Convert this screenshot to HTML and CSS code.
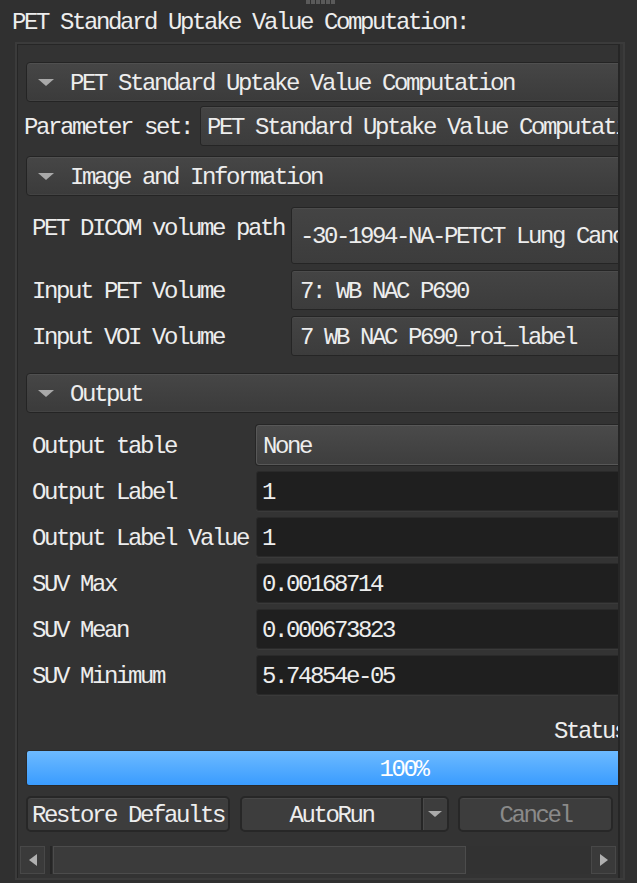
FILE: index.html
```html
<!DOCTYPE html>
<html>
<head>
<meta charset="utf-8">
<link rel="stylesheet" href="styles.css">
</head>
<body>
<div class="grip"><span></span><span></span><span></span><span></span><span></span><span></span></div>
<div class="title">PET Standard Uptake Value Computation:</div>
<div class="frame">
  <div class="viewport">
    <div class="content">
      <div class="header"><span class="arrow"></span><span class="htext">PET Standard Uptake Value Computation</span></div>
      <div class="param-row">
        <span class="label">Parameter set:</span>
        <div class="combo">PET Standard Uptake Value Computation</div>
      </div>
      <div class="header section-gap"><span class="arrow"></span><span class="htext">Image and Information</span></div>
      <div class="form form-image">
        <div class="label">PET DICOM volume path</div>
        <div class="combo combo-img path">-30-1994-NA-PETCT Lung Cancer</div>
        <div class="label">Input PET Volume</div>
        <div class="combo combo-img">7: WB NAC P690</div>
        <div class="label">Input VOI Volume</div>
        <div class="combo combo-img">7 WB NAC P690_roi_label</div>
      </div>
      <div class="header output-gap"><span class="arrow"></span><span class="htext">Output</span></div>
      <div class="form form-output">
        <div class="label">Output table</div>
        <div class="combo combo-light">None</div>
        <div class="label">Output Label</div>
        <div class="field">1</div>
        <div class="label">Output Label Value</div>
        <div class="field">1</div>
        <div class="label">SUV Max</div>
        <div class="field">0.00168714</div>
        <div class="label">SUV Mean</div>
        <div class="field">0.000673823</div>
        <div class="label">SUV Minimum</div>
        <div class="field">5.74854e-05</div>
      </div>
      <div class="status">Status</div>
      <div class="progress">100%</div>
      <div class="buttons">
        <div class="btn btn-restore">Restore Defaults</div>
        <div class="btn btn-autorun"><span class="ar-main">AutoRun</span><span class="ar-drop"><span class="ar-arrow"></span></span></div>
        <div class="btn btn-cancel">Cancel</div>
      </div>
    </div>
    <div class="hscroll">
      <div class="sb-btn"><span class="tri-left"></span></div>
      <div class="sb-track"><span class="sb-sep"></span><span class="sb-thumb"></span></div>
      <div class="sb-btn"><span class="tri-right"></span></div>
    </div>
  </div>
</div>
</body>
</html>
```
FILE: styles.css
```css
html, body {
  margin: 0;
  padding: 0;
}
body {
  width: 637px;
  height: 883px;
  overflow: hidden;
  background: #303030;
  color: #ededed;
  font-family: "Liberation Mono", "DejaVu Sans Mono", monospace;
  font-size: 24px;
  letter-spacing: -2.4px;
}
.grip {
  display: flex;
  gap: 1px;
  height: 5px;
  padding-left: 306px;
}
.grip span {
  width: 4px;
  height: 4px;
  background: #5a5a5a;
}
.title {
  height: 31px;
  box-sizing: border-box;
  padding: 4px 0 0 12px;
  line-height: 27px;
  white-space: nowrap;
}
.frame {
  margin: 6px 0 0 15px;
  width: 610px;
  height: 838px;
  box-sizing: border-box;
  border: 2px solid #3b3b3b;
  background: #343434;
}
.viewport {
  height: 100%;
  box-sizing: border-box;
  margin-right: 3px;
  border-top: 1px solid #262626;
  border-left: 1px solid #262626;
  border-right: 2px solid #262626;
  background: #333333;
  display: flex;
  flex-direction: column;
  overflow: hidden;
}
.content {
  flex: 1;
  min-height: 0;
  width: 770px;
  box-sizing: border-box;
  padding: 17px 7px 0 8px;
  overflow: hidden;
}
.header {
  height: 40px;
  box-sizing: border-box;
  display: flex;
  align-items: center;
  gap: 16px;
  padding-left: 11px;
  border: 1px solid #242424;
  border-radius: 4px;
  background: linear-gradient(#464646, #3b3b3b);
  box-shadow: inset 0 1px 0 #505050, inset 0 -1px 0 #434343;
  white-space: nowrap;
}
.htext {
  padding-top: 4px;
  line-height: 34px;
}
.arrow {
  width: 0;
  height: 0;
  border-left: 8px solid transparent;
  border-right: 8px solid transparent;
  border-top: 7px solid #a9a9a9;
}
.section-gap {
  margin-top: 10px;
}
.output-gap {
  margin-top: 17px;
}
.label {
  height: 40px;
  box-sizing: border-box;
  padding-top: 4px;
  line-height: 36px;
  white-space: nowrap;
}
.param-row {
  display: flex;
  gap: 8px;
  height: 40px;
  margin: 4px 0 0 -2px;
}
.combo {
  flex: 1;
  box-sizing: border-box;
  border: 1px solid #252525;
  border-radius: 3px;
  background: linear-gradient(#444444, #3c3c3c);
  box-shadow: inset 0 1px 0 #4c4c4c;
  padding: 4px 0 0 6px;
  line-height: 34px;
  white-space: nowrap;
  overflow: hidden;
}
.combo-img {
  padding-left: 8px;
}
.combo.path {
  padding-top: 3px;
  line-height: 52px;
}
.combo-light {
  border: 1px solid #585858;
  background: linear-gradient(#4a4a4a, #3e3e3e);
  box-shadow: 0 0 0 1px #262626;
}
.form {
  display: grid;
  grid-template-columns: auto 1fr;
  row-gap: 6px;
  margin-left: 6px;
}
.form-image {
  margin-top: 11px;
  column-gap: 7px;
  grid-template-rows: 57px 40px 40px;
}
.form-image .label {
  align-self: start;
}
.form-output {
  margin-top: 12px;
  column-gap: 8px;
  grid-auto-rows: 40px;
}
.field {
  box-sizing: border-box;
  background: #1f1f1f;
  border: 1px solid #2a2a2a;
  border-radius: 3px;
  box-shadow: 0 1px 0 #3a3a3a;
  padding: 4px 0 0 5px;
  line-height: 34px;
  white-space: nowrap;
}
.status {
  margin-top: 24px;
  height: 24px;
  box-sizing: border-box;
  padding: 2px 0 0 528px;
  line-height: 22px;
  white-space: nowrap;
}
.progress {
  margin-top: 7px;
  height: 36px;
  box-sizing: border-box;
  border: 1px solid #2a2a2a;
  border-radius: 3px;
  background: linear-gradient(#6dbaff, #3a9cff);
  color: #ffffff;
  text-align: center;
  padding-top: 3px;
  line-height: 31px;
}
.buttons {
  display: flex;
  height: 36px;
  margin-top: 10px;
}
.btn {
  box-sizing: border-box;
  border: 2px solid #272727;
  border-radius: 5px;
  background: #3d3d3d;
  box-shadow: inset 0 1px 0 #484848;
  padding-top: 3px;
  line-height: 29px;
  text-align: center;
  white-space: nowrap;
}
.btn-restore {
  width: 204px;
  margin-right: 10px;
}
.btn-autorun {
  width: 209px;
  margin-right: 9px;
  display: flex;
  padding-top: 0;
}
.ar-main {
  flex: 1;
  text-align: center;
  padding-top: 3px;
  line-height: 29px;
}
.ar-drop {
  width: 26px;
  box-sizing: border-box;
  border-left: 2px solid #262626;
  box-shadow: inset 1px 0 0 #4a4a4a;
  display: flex;
  align-items: center;
  justify-content: center;
}
.ar-arrow {
  width: 0;
  height: 0;
  border-left: 7px solid transparent;
  border-right: 7px solid transparent;
  border-top: 6px solid #ababab;
}
.btn-cancel {
  width: 155px;
  color: #8a8a8a;
}
.hscroll {
  flex: none;
  height: 28px;
  margin: 0 2px 4px;
  display: flex;
}
.sb-btn {
  width: 25px;
  box-sizing: border-box;
  border: 1px solid #484848;
  background: #3a3a3a;
  display: flex;
  align-items: center;
  justify-content: center;
}
.tri-left {
  width: 0;
  height: 0;
  border-top: 6.5px solid transparent;
  border-bottom: 6.5px solid transparent;
  border-right: 8px solid #b0b0b0;
}
.tri-right {
  width: 0;
  height: 0;
  border-top: 6.5px solid transparent;
  border-bottom: 6.5px solid transparent;
  border-left: 8px solid #b0b0b0;
}
.sb-track {
  flex: 1;
  display: flex;
  background: #323232;
}
.sb-sep {
  width: 2px;
  margin-left: 5px;
  background: #262626;
}
.sb-thumb {
  width: 413px;
  margin-left: 1px;
  box-sizing: border-box;
  border: 1px solid #4c4c4c;
  background: #3b3b3b;
}
```
